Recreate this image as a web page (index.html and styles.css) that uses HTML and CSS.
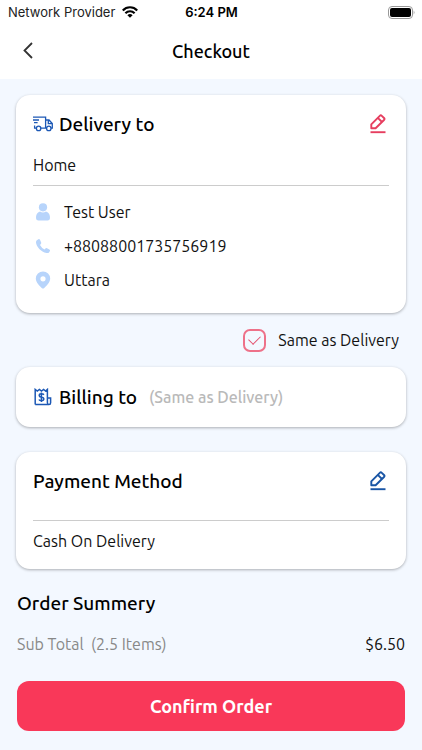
FILE: index.html
```html
<!DOCTYPE html>
<html lang="en">
<head>
<meta charset="utf-8">
<meta name="viewport" content="width=device-width, initial-scale=1">
<title>Checkout</title>
<link rel="stylesheet" href="styles.css">
</head>
<body>
<svg class="sprite" aria-hidden="true">
  <symbol id="edit" viewBox="0 0 16 20">
    <g fill="none" stroke="currentColor" stroke-width="1.9" stroke-linejoin="round">
      <path d="M1.300 14.200V10.300L9.800 1.800Q10.800 .8 11.800 1.800L14 4Q15 5 14 6L5.600 14.200ZM7.800 3.800L12 8"/>
      <path d="M.5 18.200H15.500"/>
    </g>
  </symbol>
</svg>
<header class="top">
  <div class="status">
    <div class="carrier">
      <span>Network Provider</span>
      <svg class="wifi" viewBox="0 0 16 12" fill="none" stroke="#000" stroke-width="2.2" aria-hidden="true">
        <path d="M.8 4.4C4.8.2 11.2.2 15.2 4.4M3.4 7.2C6 4.6 10 4.6 12.6 7.2"/>
        <path d="M5.4 9.2Q8 6.9 10.6 9.2L8 11.8Z" fill="#000" stroke="none"/>
      </svg>
    </div>
    <time class="clock">6:24 PM</time>
    <svg class="battery" viewBox="0 0 27 13" aria-hidden="true">
      <rect x=".5" y=".5" width="24" height="12" rx="3.5" fill="none" stroke="#999"/>
      <rect x="2" y="2" width="21" height="9" rx="2"/>
      <path d="M25.7 4.5Q27.2 6.5 25.7 8.5Z" fill="#999"/>
    </svg>
  </div>
  <div class="navbar">
    <button class="back" type="button" aria-label="Back">
      <svg viewBox="0 0 10 17" fill="none" stroke="#333" stroke-width="1.8"><path d="M9 1L1.5 8.5L9 16"/></svg>
    </button>
    <h1>Checkout</h1>
  </div>
</header>
<main>
  <section class="card delivery">
    <div class="card-head">
      <svg class="head-icon" viewBox="0 0 20 16" fill="none" stroke="#1c58b5" stroke-width="1.3" aria-hidden="true">
        <path d="M0 1.2H12.6V12.2H8M3.2 12.2H1.6V9.6M0 4H6M1 6.6H4.6M12.6 4H16L19.3 7.6V12.2H18M12.6 12.2H13.5M15.3 4V7.6H19.3"/>
        <circle cx="5.6" cy="12.4" r="2.2"/><circle cx="15.8" cy="12.4" r="2.2"/>
      </svg>
      <h2>Delivery to</h2>
      <button class="edit red" type="button" aria-label="Edit delivery address"><svg><use href="#edit"/></svg></button>
    </div>
    <p class="place">Home</p>
    <ul class="contact">
      <li>
        <svg viewBox="0 0 16 18" fill="#b7d4fb" aria-hidden="true"><circle cx="8" cy="4.3" r="4.1"/><path d="M5 8.4Q8 10.4 11 8.4C14 9.4 15.2 12 15 15.2Q14.8 17.5 12.6 17.5H3.4Q1.2 17.5 1 15.2C.8 12 2 9.4 5 8.4Z"/></svg>
        <span>Test User</span>
      </li>
      <li>
        <svg viewBox="0 0 16 18" fill="#b7d4fb" aria-hidden="true"><path d="M1.800 3.200L3.400 2.200Q4.400 1.800 5 2.800L6.200 5.400Q6.500 6.300 5.800 7L5 7.900Q6.600 11 9.600 12.400L10.400 11.500Q11 10.900 12 11.200L14.400 12.400Q15.400 13 14.900 14L14 15.400Q13.200 16.200 11.500 15.900C6 14.700 1.300 9.600 1 5.400Q.9 3.900 1.800 3.200Z"/></svg>
        <span>+88088001735756919</span>
      </li>
      <li>
        <svg viewBox="0 0 16 18" fill="#b7d4fb" aria-hidden="true"><path fill-rule="evenodd" d="M8 .4A7.200 7.200 0 0 1 15.200 7.600C15.200 11.800 10.800 15.600 9 17.200Q8 18 7 17.200C5.200 15.600 .8 11.800 .8 7.600A7.200 7.200 0 0 1 8 .4ZM8 5.200A2.600 2.600 0 1 0 8 10.400A2.600 2.600 0 1 0 8 5.200Z"/></svg>
        <span>Uttara</span>
      </li>
    </ul>
  </section>
  <label class="same" for="same">
    <input id="same" type="checkbox" checked>
    <span>Same as Delivery</span>
  </label>
  <section class="card billing">
    <div class="card-head">
      <svg class="head-icon" viewBox="0 0 20 18" fill="none" stroke="#1c58b5" stroke-width="1.5" aria-hidden="true">
        <path d="M2.200 16.600V1.400L4.300 3L6.400 1.400L8.500 3L10.600 1.400L12.600 3L14.400 1.400V14.800Q14.400 16.600 16 16.600Q17.600 16.600 17.600 14.800V10H14.400M2.200 16.600H16"/>
        <path d="M10.800 6.800Q10.300 5.800 8.400 5.800Q6.200 5.800 6.200 7.500Q6.200 8.900 8.400 9.200Q10.800 9.500 10.800 11Q10.800 12.600 8.400 12.600Q6.400 12.600 6 11.400M8.400 4.400V14"/>
      </svg>
      <h2>Billing to</h2>
      <span class="hint">(Same as Delivery)</span>
    </div>
  </section>
  <section class="card payment">
    <div class="card-head">
      <h2>Payment Method</h2>
      <button class="edit blue" type="button" aria-label="Edit payment method"><svg><use href="#edit"/></svg></button>
    </div>
    <p class="method">Cash On Delivery</p>
  </section>
  <section class="summary">
    <h2>Order Summery</h2>
    <div class="line">
      <span class="label">Sub Total&nbsp; (2.5 Items)</span>
      <span>$6.50</span>
    </div>
    <button class="confirm" type="button">Confirm Order</button>
  </section>
</main>
</body>
</html>
```
FILE: styles.css
```css
* { box-sizing: border-box; }

body {
  margin: 0;
  background: #f3f8ff;
  color: #111;
  font: 16px/24px Ubuntu, "Noto Sans", sans-serif;
}

h1, h2, p, ul { margin: 0; padding: 0; }
h1, h2 { line-height: 24px; font-weight: 500; color: #000; }
h1 { font-size: 18px; }
h2 { font-size: 19px; }
button { padding: 0; border: 0; background: none; font: inherit; cursor: pointer; }
svg { display: block; }
.sprite { display: none; }

.top { background: #fff; }

.status {
  display: grid;
  grid-template-columns: 1fr auto 1fr;
  align-items: center;
  height: 24px;
  padding: 0 7px 0 8px;
  font: 13px/24px Inter, sans-serif;
  color: #222;
}
.carrier { display: flex; align-items: center; gap: 7px; }
.wifi { width: 16px; height: 12px; }
.clock { font-weight: 600; color: #000; }
.battery { width: 27px; height: 13px; justify-self: end; }

.navbar {
  display: grid;
  grid-template-columns: 40px 1fr 40px;
  align-items: center;
  height: 55px;
  padding: 0 8px 2px;
}
.navbar h1 { text-align: center; }
.back { display: grid; place-items: center; height: 40px; }
.back svg { width: 10px; height: 17px; }

main { padding: 16px 16px 19px; }

.card {
  padding: 17px;
  border-radius: 14px;
  background: #fff;
  box-shadow: 0 1px 3px rgba(0, 0, 0, 0.3);
}
.card-head { display: flex; align-items: center; gap: 6px; }
.head-icon { width: 20px; height: 18px; }

.edit { margin-left: auto; padding: 0 3px; }
.edit svg { width: 16px; height: 20px; }
.red { color: #e63e5f; }
.blue { color: #1955a5; }

.place {
  margin-top: 17px;
  padding-bottom: 8px;
  border-bottom: 1px solid #ccc;
}
.contact {
  display: grid;
  gap: 10px;
  margin-top: 14px;
  list-style: none;
}
.contact li { display: flex; align-items: center; gap: 13px; }
.contact svg { width: 16px; height: 18px; margin-left: 2px; }
.delivery { padding-bottom: 21px; }

.same {
  display: flex;
  justify-content: flex-end;
  align-items: center;
  gap: 12px;
  height: 54px;
  padding-right: 7px;
}
.same input {
  appearance: none;
  display: grid;
  place-items: center;
  width: 23px;
  height: 23px;
  margin: 0;
  border: 2px solid #ee7189;
  border-radius: 7px;
}
.same input:checked::before {
  content: "";
  width: 10px;
  height: 6px;
  margin-bottom: 3px;
  border: solid #e4526f;
  border-width: 0 0 1px 1px;
  transform: rotate(-45deg);
}

.hint { margin-left: 6px; font-weight: 500; color: #b9b9b9; }

.billing { padding: 18px 17px; }
.payment { margin-top: 25px; padding-bottom: 16px; }
.method {
  margin-top: 27px;
  padding-top: 8px;
  border-top: 1px solid #ccc;
}

.summary { margin-top: 22px; padding: 0 1px; }
.line { display: flex; justify-content: space-between; margin-top: 17px; }
.label { color: #888; }

.confirm {
  width: 100%;
  height: 50px;
  margin-top: 25px;
  border-radius: 12px;
  background: #f93859;
  color: #fff;
  font-size: 18px;
  font-weight: 600;
}
```
